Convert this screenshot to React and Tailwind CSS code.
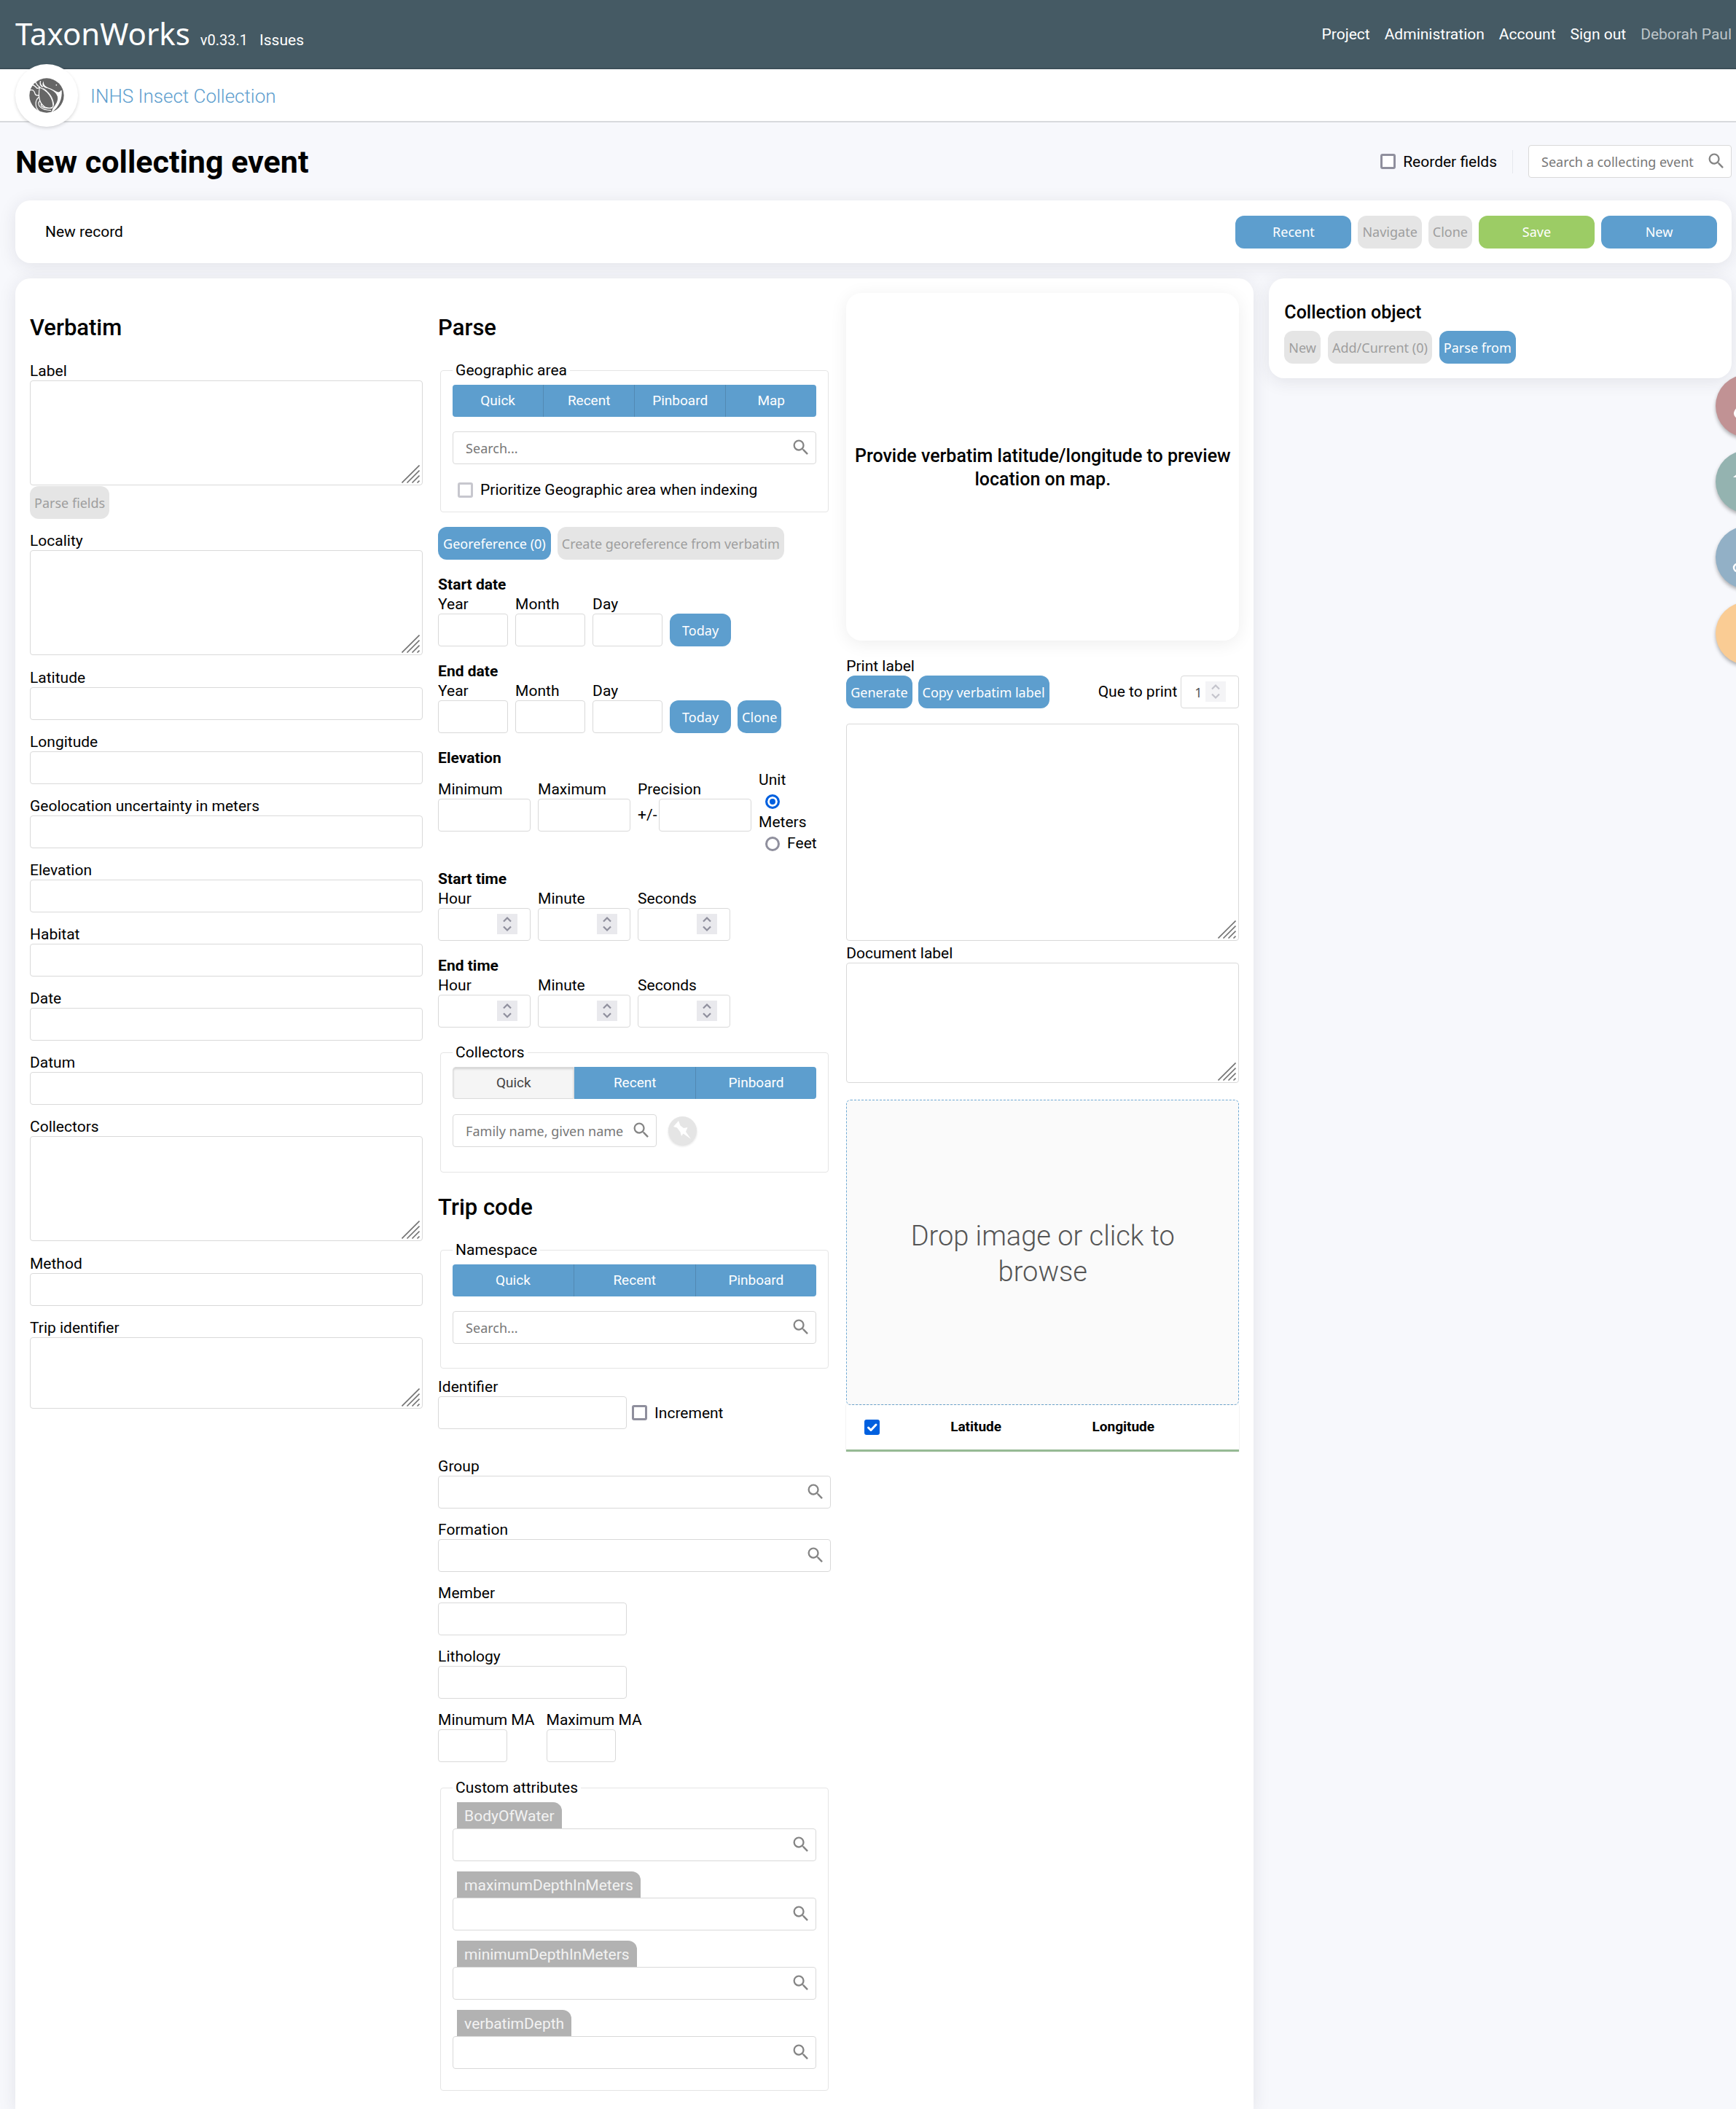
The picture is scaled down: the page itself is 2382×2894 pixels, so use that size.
import React, { useId } from "react";
import { MdSearch } from "react-icons/md";

const controlBase =
  "border border-[#d9d9d9] rounded bg-white font-['Noto_Sans',sans-serif] text-lg text-[#555] placeholder:text-[#777] outline-none focus:border-[#5d9ece]";
const labelBase = "block leading-[22px] pb-[2px] whitespace-nowrap";
const cardShadow = "shadow-[0_4px_24px_rgba(35,38,60,0.10)]";

function Button({ children, tone = "blue", className = "px-[6px]", disabled = false }) {
  const tones = {
    blue: "bg-[#5d9ece] text-white",
    green: "bg-[#9ccc65] text-white",
    gray: "bg-[#e5e5e5] text-[#9e9e9e]",
  };
  return (
    <button
      type="button"
      disabled={disabled}
      className={`h-[45px] rounded-xl font-['Noto_Sans',sans-serif] text-lg whitespace-nowrap ${tones[tone]} ${className}`}
    >
      {children}
    </button>
  );
}

function Field({ label, className = "", inputClass = "w-full" }) {
  const id = useId();
  return (
    <div className={className}>
      <label htmlFor={id} className={labelBase}>{label}</label>
      <input id={id} type="text" className={`block h-[45px] px-4 ${controlBase} ${inputClass}`} />
    </div>
  );
}

function TextArea({ id, heightClass, label }) {
  return (
    <div className="relative mb-px">
      <textarea id={id} aria-label={label} className={`block w-full resize-none p-2 ${heightClass} ${controlBase}`} />
      <svg className="pointer-events-none absolute right-1 bottom-[3px]" width="25" height="25" viewBox="0 0 25 25" stroke="#737373" strokeWidth="1.6" aria-hidden="true">
        <path d="M0.5 24.5L24.5 0.5M7.5 24.5L24.5 7.5M14.5 24.5L24.5 14.5M21.5 24.5L24.5 21.5" />
      </svg>
    </div>
  );
}

function AreaField({ label, heightClass }) {
  const id = useId();
  return (
    <div>
      <label htmlFor={id} className={labelBase}>{label}</label>
      <TextArea id={id} heightClass={heightClass} />
    </div>
  );
}

function SearchBox({ placeholder, label, className = "w-full", id }) {
  return (
    <div className={`relative ${className}`}>
      <input id={id} type="text" placeholder={placeholder} aria-label={label} className={`block h-[45px] w-full pr-10 pl-[17px] ${controlBase}`} />
      <MdSearch className="pointer-events-none absolute top-2 right-[7px] size-7 text-[#858585]" />
    </div>
  );
}

function SearchField({ label }) {
  const id = useId();
  return (
    <div>
      <label htmlFor={id} className={labelBase}>{label}</label>
      <SearchBox id={id} />
    </div>
  );
}

function Checkbox({ label, gap = "gap-[10px]", border = "border-[#8f8f9d]" }) {
  return (
    <label className={`flex items-center leading-6 whitespace-nowrap ${gap}`}>
      <input type="checkbox" className={`size-[21px] shrink-0 appearance-none rounded-[3px] border-3 bg-white ${border}`} />
      {label}
    </label>
  );
}

function Tabs({ name, items, active }) {
  return (
    <div role="group" aria-label={name} className="flex h-11 overflow-hidden rounded">
      {items.map((item) => (
        <button
          key={item}
          type="button"
          aria-pressed={item === active}
          className={
            item === active
              ? "flex-1 rounded-l border border-[#dcdcdc] bg-[#f5f5f5] text-[19px] text-[#444] shadow-[inset_0_2px_3px_rgba(0,0,0,0.15)]"
              : "flex-1 border-r border-[#5289b3] bg-[#5d9ece] text-[19px] text-white last:border-r-0"
          }
        >
          {item}
        </button>
      ))}
    </div>
  );
}

function Fieldset({ legend, children, className = "" }) {
  return (
    <fieldset className={`mx-[3px] rounded border border-[#e5e5e5] px-4 pt-[10px] ${className}`}>
      <legend className="px-1 leading-5">{legend}</legend>
      {children}
    </fieldset>
  );
}

function Heading({ children }) {
  return <h2 className="pt-[30px] pb-[30px] text-[31px] leading-9 font-medium">{children}</h2>;
}

function Group({ title, children }) {
  return (
    <section className="mt-[23px]">
      <h3 className="mb-[5px] leading-[22px] font-bold">{title}</h3>
      {children}
    </section>
  );
}

function Spinner({ className = "", bg = "#e9e9ed", stroke = "#8f8f9d" }) {
  return (
    <svg className={`pointer-events-none absolute top-2 ${className}`} width="28" height="28" viewBox="0 0 28 28" fill="none" aria-hidden="true">
      <path d="M0 0H28V28H0Z" fill={bg} />
      <path d="M9 10.5L14 5.5L19 10.5M9 17.5L14 22.5L19 17.5" stroke={stroke} strokeWidth="2.2" />
    </svg>
  );
}

function NumberField({ label }) {
  const id = useId();
  return (
    <div>
      <label htmlFor={id} className={labelBase}>{label}</label>
      <div className="relative w-[127px]">
        <input id={id} type="number" className={`block h-[45px] w-full pr-12 pl-4 [appearance:textfield] ${controlBase}`} />
        <Spinner className="right-[18px]" />
      </div>
    </div>
  );
}

function DateFields({ clone = false }) {
  return (
    <div className="flex items-end">
      <div className="mr-[10px] flex gap-[10px]">
        {["Year", "Month", "Day"].map((l) => (
          <Field key={l} label={l} inputClass="w-24" />
        ))}
      </div>
      <Button className="w-[84px]">Today</Button>
      {clone && <Button className="ml-[9px] px-[6px]">Clone</Button>}
    </div>
  );
}

function TimeFields() {
  return (
    <div className="flex gap-[10px]">
      <NumberField label="Hour" />
      <NumberField label="Minute" />
      <NumberField label="Seconds" />
    </div>
  );
}

const radioClass =
  "ml-[9px] inline-block size-5 appearance-none rounded-full border-3 border-[#8f8f9d] bg-white align-middle checked:border-[#0060df] checked:bg-[#0060df] checked:shadow-[inset_0_0_0_3px_white]";

function Logo() {
  return (
    <svg width="48" height="48" viewBox="90 67 144 144" fill="none" aria-hidden="true">
      <circle cx="162" cy="139" r="71" fill="#666" />
      <path d="M150 80C147 97 160 104 176 110C194 117 204 127 213 125C220 123 218 116 224 118C227 150 213 188 182 209L187 193C200 177 212 158 206 143C197 123 176 114 158 108C144 103 142 92 150 80Z" fill="#fff" />
      <path d="M133 106C127 140 130 172 156 187C172 194 189 191 189 182C188 150 167 118 133 106Z" fill="#666" stroke="#fff" strokeWidth="3.5" />
      <path d="M160 108C182 112 204 128 206 144C207 158 199 168 191 178C190 150 178 126 152 110Z" fill="#666" />
      <path d="M148 110C172 124 190 150 191 180" stroke="#fff" strokeWidth="3" />
      <path d="M88 120C102 111 111 118 114 131C116 140 123 139 131 139M97 96C109 93 117 103 123 110L136 106M116 84C121 92 122 100 134 104M137 80C133 90 137 98 146 104" stroke="#fff" strokeWidth="4" />
      <path d="M131 145C112 160 113 188 133 206M134 160C120 176 136 200 180 200M140 174C134 184 152 194 184 191" stroke="#fff" strokeWidth="3.5" />
      <circle cx="202" cy="96" r="2.5" fill="#fff" />
    </svg>
  );
}

function SideTool({ color, children }) {
  return (
    <a href="#tool" aria-label="Radial tool" className={`block size-[86px] rounded-full shadow-[0_3px_5px_rgba(0,0,0,0.3)] ${color}`}>
      <svg width="86" height="86" viewBox="0 0 86 86" fill="none" stroke="#fff" strokeWidth="3" aria-hidden="true">
        {children}
      </svg>
    </a>
  );
}

export default function App() {
  return (
    <div className="relative flex min-h-screen flex-col bg-[#f7f8fc] font-[Roboto,'Noto_Sans',sans-serif] text-[21px] text-black">
      <header className="flex h-[95px] items-center justify-between border-b-2 border-[#3d4f59] bg-[#455a64] pr-[6px] pl-[21px] text-white">
        <div className="flex items-baseline">
          <a href="#home" className="font-['Noto_Sans',sans-serif] text-[42px] leading-[48px]">TaxonWorks</a>
          <span className="ml-[14px] text-[20px]">v0.33.1</span>
          <a href="#issues" className="ml-4">Issues</a>
        </div>
        <nav className="flex gap-5 pt-[2px]">
          <a href="#project">Project</a>
          <a href="#administration">Administration</a>
          <a href="#account">Account</a>
          <a href="#signout">Sign out</a>
          <span className="text-[#bcc4c8]">Deborah Paul</span>
        </nav>
      </header>

      <div className="flex h-[73px] items-center border-b-2 border-[#d8dadd] bg-white pl-[21px]">
        <div className="flex size-[86px] shrink-0 items-center justify-center rounded-full bg-white shadow-[0_2px_4px_rgba(0,0,0,0.15)]">
          <Logo />
        </div>
        <a href="#collection" className="ml-[17px] pt-[3px] text-[26px] font-light text-[#5d9ece]">INHS Insect Collection</a>
      </div>

      <div className="flex h-[107px] items-center justify-between pr-[6px] pl-[21px]">
        <h1 className="pt-px text-[43px] leading-[50px] font-bold">New collecting event</h1>
        <div className="flex items-center">
          <Checkbox label="Reorder fields" />
          <div className="mx-[21px] h-8 w-px bg-[#e6e8ee]" />
          <SearchBox placeholder="Search a collecting event" label="Search a collecting event" className="w-[279px]" />
        </div>
      </div>

      <div className="mr-[6px] ml-[21px] flex flex-1 flex-col gap-[21px]">
        <div className={`flex h-[86px] items-center justify-between rounded-[21px] bg-white pr-5 pl-[41px] ${cardShadow}`}>
          <span className="pt-[2px]">New record</span>
          <div className="flex gap-[9px]">
            <Button className="w-[159px]">Recent</Button>
            <Button tone="gray" disabled>Navigate</Button>
            <Button tone="gray" disabled>Clone</Button>
            <Button tone="green" className="w-[159px]">Save</Button>
            <Button className="w-[159px]">New</Button>
          </div>
        </div>

        <div className="grid flex-1 grid-cols-[minmax(0,1fr)_26.95%] gap-[21px]">
          <main className={`grid grid-cols-3 items-start gap-[21px] rounded-t-[21px] bg-white px-5 pt-5 pb-5 ${cardShadow}`}>
            <div className="flex min-w-0 flex-col">
              <Heading>Verbatim</Heading>
              <div className="flex flex-col gap-[19px]">
                <div>
                  <AreaField label="Label" heightClass="h-[144px]" />
                  <Button tone="gray" disabled>Parse fields</Button>
                </div>
                <AreaField label="Locality" heightClass="h-[144px]" />
                {["Latitude", "Longitude", "Geolocation uncertainty in meters", "Elevation", "Habitat", "Date", "Datum"].map((l) => (
                  <Field key={l} label={l} />
                ))}
                <AreaField label="Collectors" heightClass="h-[144px]" />
                <Field label="Method" />
                <AreaField label="Trip identifier" heightClass="h-[98px]" />
              </div>
            </div>

            <div className="min-w-0">
              <Heading>Parse</Heading>
              <Fieldset legend="Geographic area" className="pb-[18px]">
                <Tabs name="Geographic area source" items={["Quick", "Recent", "Pinboard", "Map"]} />
                <SearchBox placeholder="Search..." label="Search geographic area" className="mt-5 w-full" />
                <div className="mt-[23px] pl-[7px]">
                  <Checkbox label="Prioritize Geographic area when indexing" border="border-[#c7c7ce]" />
                </div>
              </Fieldset>
              <div className="mt-5 flex gap-[9px]">
                <Button className="px-[7px]">Georeference (0)</Button>
                <Button tone="gray" disabled>Create georeference from verbatim</Button>
              </div>
              <Group title="Start date"><DateFields /></Group>
              <Group title="End date"><DateFields clone /></Group>
              <Group title="Elevation">
                <div className="flex items-start gap-[10px]">
                  <Field label="Minimum" className="pt-4" inputClass="w-[127px]" />
                  <Field label="Maximum" className="pt-4" inputClass="w-[127px]" />
                  <div className="pt-4">
                    <label htmlFor="precision" className={labelBase}>Precision</label>
                    <div className="flex items-center">
                      <span className="w-[29px]">+/-</span>
                      <input id="precision" type="text" className={`block h-[45px] w-[127px] px-4 ${controlBase}`} />
                    </div>
                  </div>
                  <div role="radiogroup" aria-label="Unit" className="w-20 leading-[29px]">
                    <div>Unit</div>
                    <label className="block">
                      <input type="radio" name="unit" defaultChecked className={radioClass} />
                      <span className="block">Meters</span>
                    </label>
                    <label className="flex items-center gap-[10px]">
                      <input type="radio" name="unit" className={radioClass} />
                      Feet
                    </label>
                  </div>
                </div>
              </Group>
              <Group title="Start time"><TimeFields /></Group>
              <Group title="End time"><TimeFields /></Group>
              <div className="h-6" />
              <Fieldset legend="Collectors" className="pb-[34px]">
                <Tabs name="Collectors source" items={["Quick", "Recent", "Pinboard"]} active="Quick" />
                <div className="mt-[21px] flex items-center gap-4">
                  <SearchBox placeholder="Family name, given name" label="Collector name" className="w-[280px]" />
                  <button type="button" disabled aria-label="Pin" className="size-[39px] rounded-full bg-[#e5e5e5] shadow-[0_2px_3px_rgba(0,0,0,0.12)]">
                    <svg width="39" height="39" viewBox="0 0 39 39" fill="#fff" aria-hidden="true">
                      <path d="M14 6L16.5 12.5L21 16L26.5 15L24 21L31 31L20.5 23.5L18 27L16.5 21.5L12 15.5L7 14Z" />
                    </svg>
                  </button>
                </div>
              </Fieldset>
              <Heading>Trip code</Heading>
              <Fieldset legend="Namespace" className="pb-[33px]">
                <Tabs name="Namespace source" items={["Quick", "Recent", "Pinboard"]} />
                <SearchBox placeholder="Search..." label="Search namespace" className="mt-5 w-full" />
              </Fieldset>
              <div className="mt-[14px] flex items-end gap-[7px]">
                <Field label="Identifier" inputClass="w-[259px]" />
                <div className="flex h-[45px] items-center">
                  <Checkbox label="Increment" />
                </div>
              </div>
              <div className="mt-10 flex flex-col gap-[18px]">
                <SearchField label="Group" />
                <SearchField label="Formation" />
                <Field label="Member" inputClass="w-[259px]" />
                <Field label="Lithology" inputClass="w-[259px]" />
                <div className="flex gap-4">
                  <Field label="Minumum MA" inputClass="w-[95px]" />
                  <Field label="Maximum MA" inputClass="w-[95px]" />
                </div>
              </div>
              <div className="h-[25px]" />
              <Fieldset legend="Custom attributes" className="pb-[29px]">
                <div className="flex flex-col gap-[14px]">
                  {["BodyOfWater", "maximumDepthInMeters", "minimumDepthInMeters", "verbatimDepth"].map((name) => (
                    <div key={name}>
                      <label htmlFor={name} className="ml-[6px] block h-9 w-fit rounded-tr-xl bg-[#b2b2b2] px-[10px] leading-[38px] text-[#f2f2f2]">{name}</label>
                      <SearchBox id={name} />
                    </div>
                  ))}
                </div>
              </Fieldset>
            </div>

            <div className="min-w-0">
              <div className="flex h-[477px] items-center justify-center rounded-[21px] bg-white px-2 pt-[2px] text-center text-[25px] leading-8 font-medium shadow-[0_4px_24px_rgba(0,0,0,0.07)]">
                Provide verbatim latitude/longitude to preview location on map.
              </div>
              <div className="mt-6">
                <label htmlFor="print-label" className={labelBase}>Print label</label>
                <div className="flex gap-2">
                  <Button>Generate</Button>
                  <Button>Copy verbatim label</Button>
                  <label className="ml-auto flex items-center gap-[5px]">
                    Que to print
                    <span className="relative block w-20">
                      <input type="number" defaultValue="1" className={`block h-[45px] w-full pl-[18px] [appearance:textfield] ${controlBase}`} />
                      <Spinner className="right-[18px]" bg="#f4f4f6" stroke="#c4c4cc" />
                    </span>
                  </label>
                </div>
                <div className="mt-[21px]">
                  <TextArea id="print-label" heightClass="h-[298px]" />
                </div>
              </div>
              <div className="mt-[6px]">
                <AreaField label="Document label" heightClass="h-[165px]" />
              </div>
              <button type="button" className="mt-[23px] flex h-[419px] w-full items-center justify-center rounded-md border border-dashed border-[#6fa9d4] bg-[#fafafa] px-14 pt-1 text-[38px] leading-[49px] font-light text-[#555]">
                Drop image or click to browse
              </button>
              <table className="w-full table-fixed border-b-3 border-[#96ba94] text-[19px] shadow-[0_0_2px_rgba(0,0,0,0.12)]">
                <thead>
                  <tr className="h-[62px]">
                    <th className="w-[13%]">
                      <span className="relative mx-auto block size-[21px]">
                        <input type="checkbox" defaultChecked aria-label="Select all" className="block size-[21px] appearance-none rounded-[3px] bg-[#0060df]" />
                        <svg className="pointer-events-none absolute inset-0" width="21" height="21" viewBox="0 0 21 21" fill="none" stroke="#fff" strokeWidth="3" strokeLinecap="round" strokeLinejoin="round" aria-hidden="true">
                          <path d="M5.5 11L9 14.5L16 7" />
                        </svg>
                      </span>
                    </th>
                    <th className="w-[40%] font-bold">Latitude</th>
                    <th className="w-[35%] font-bold">Longitude</th>
                    <th className="w-[12%]" />
                  </tr>
                </thead>
              </table>
            </div>
          </main>

          <aside className={`self-start rounded-[21px] bg-white px-[21px] pt-[31px] pb-5 ${cardShadow}`}>
            <h3 className="mb-[9px] text-[25px] leading-8 font-medium">Collection object</h3>
            <div className="flex gap-[10px]">
              <Button tone="gray" disabled>New</Button>
              <Button tone="gray" disabled>Add/Current (0)</Button>
              <Button>Parse from</Button>
            </div>
          </aside>
        </div>
      </div>

      <div className="absolute top-[514px] right-0 flex w-[34px] flex-col gap-[18px] overflow-hidden pb-2 pl-[6px]">
        <SideTool color="bg-[#c19294]">
          <path d="M45 25L28 50C25 55 30 61 35 56L56 33" strokeWidth="4" />
        </SideTool>
        <SideTool color="bg-[#94b3b0]">
          <path d="M24 37H62L43 20Z" fill="#fff" stroke="none" />
        </SideTool>
        <SideTool color="bg-[#92b0c6]">
          <circle cx="30" cy="57" r="5" strokeWidth="2.5" />
        </SideTool>
        <SideTool color="bg-[#facc94]" />
      </div>
    </div>
  );
}
